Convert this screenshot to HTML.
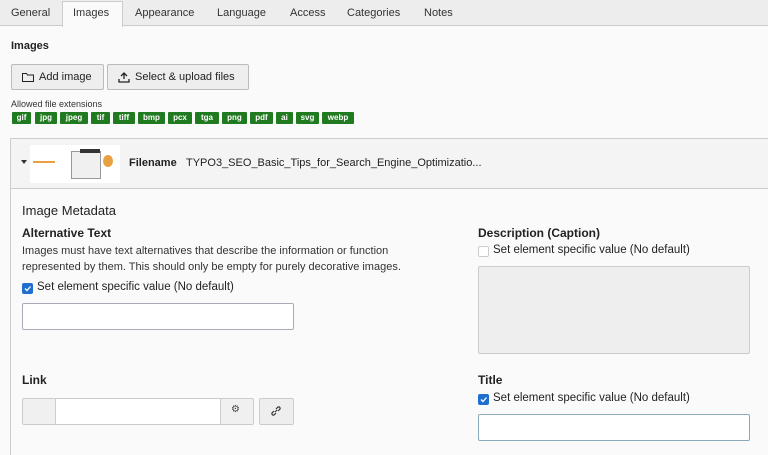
<!DOCTYPE html>
<html><head><style>
*{box-sizing:border-box;margin:0;padding:0}
body{width:768px;height:455px;overflow:hidden;background:#fafafa;font-family:"Liberation Sans","DejaVu Sans",sans-serif;font-size:11px;color:#222;position:relative}
.abs{position:absolute}
.tabs{left:0;top:0;width:768px;height:26px;background:#ededed;border-bottom:1px solid #ccc}
.tab{position:absolute;top:7px;font-size:11px;color:#333}
.act{left:62px;top:1px;width:61px;height:26px;background:#fafafa;border:1px solid #ccc;border-bottom:none;}
.btn{height:26px;background:#eee;border:1px solid #bbb;border-radius:2px;font-size:11px;color:#222;display:flex;align-items:center;padding-left:10px;gap:5px}
.ext{position:absolute;top:112px;height:12px;background:#207a1f;color:#fff;font-size:8px;font-weight:bold;line-height:12px;text-align:center;border-radius:1px}
.inp{background:#fff;border:1px solid #aab;border-radius:2px}
.cb{width:11px;height:11px;border-radius:2px}
.lbl{font-size:11.5px}
</style></head><body>
<div class="abs tabs"></div>
<div class="abs act"></div>
<div class="tab" style="left:11px">General</div>
<div class="tab" style="left:73px">Images</div>
<div class="tab" style="left:135px">Appearance</div>
<div class="tab" style="left:217px">Language</div>
<div class="tab" style="left:290px">Access</div>
<div class="tab" style="left:347px">Categories</div>
<div class="tab" style="left:424px">Notes</div>

<div class="abs" style="left:11px;top:40px;font-weight:bold">Images</div>
<div class="abs btn" style="left:11px;top:64px;width:93px"><svg width="12" height="10" viewBox="0 0 12 10"><path d="M0.5 1.5h4l1 1.5h6v6.5h-11z" fill="none" stroke="#222"/></svg>Add image</div>
<div class="abs btn" style="left:107px;top:64px;width:142px"><svg width="12" height="11" viewBox="0 0 12 11"><path d="M6 7V1M3 4l3-3 3 3M1 7v3h10V7" fill="none" stroke="#222" stroke-width="1.3"/></svg>Select &amp; upload files</div>
<div class="abs" style="left:11px;top:99px;font-size:9px;color:#333">Allowed file extensions</div>
<div class="ext" style="left:12px;width:19px">gif</div>
<div class="ext" style="left:35px;width:22px">jpg</div>
<div class="ext" style="left:60px;width:28px">jpeg</div>
<div class="ext" style="left:91px;width:19px">tif</div>
<div class="ext" style="left:113px;width:22px">tiff</div>
<div class="ext" style="left:138px;width:27px">bmp</div>
<div class="ext" style="left:168px;width:24px">pcx</div>
<div class="ext" style="left:195px;width:24px">tga</div>
<div class="ext" style="left:222px;width:25px">png</div>
<div class="ext" style="left:250px;width:23px">pdf</div>
<div class="ext" style="left:276px;width:17px">ai</div>
<div class="ext" style="left:296px;width:23px">svg</div>
<div class="ext" style="left:322px;width:32px">webp</div>

<div class="abs" style="left:10px;top:138px;width:758px;height:317px;border-left:1px solid #ccc;border-top:1px solid #ccc"></div>
<div class="abs" style="left:11px;top:139px;width:757px;height:50px;background:#f4f4f4;border-bottom:1px solid #ccc"></div>
<div class="abs" style="left:21px;top:160px;width:0;height:0;border-left:3px solid transparent;border-right:3px solid transparent;border-top:4px solid #333"></div>
<div class="abs" style="left:30px;top:145px;width:90px;height:38px;background:#fff"></div>
<div class="abs" style="left:33px;top:161px;width:22px;height:2px;background:#e8a040"></div>
<div class="abs" style="left:71px;top:151px;width:30px;height:28px;background:#f0f0f0;border:1px solid #999"></div>
<div class="abs" style="left:80px;top:149px;width:20px;height:4px;background:#333"></div>
<div class="abs" style="left:103px;top:155px;width:10px;height:12px;background:#e8a040;border-radius:50%"></div>
<div class="abs" style="left:129px;top:157px;font-weight:bold">Filename</div>
<div class="abs" style="left:186px;top:157px">TYPO3_SEO_Basic_Tips_for_Search_Engine_Optimizatio...</div>

<div class="abs" style="left:22px;top:203px;font-size:13px">Image Metadata</div>
<div class="abs" style="left:22px;top:226px;font-weight:bold;font-size:12px">Alternative Text</div>
<div class="abs" style="left:22px;top:243px;font-size:11px;line-height:16px;color:#333;width:440px">Images must have text alternatives that describe the information or function<br>represented by them. This should only be empty for purely decorative images.</div>
<div class="abs cb" style="left:22px;top:283px;background:#1f6fd0"></div>
<svg class="abs" style="left:22px;top:283px" width="11" height="11"><path d="M3 5.5l2 2 3.5-4" fill="none" stroke="#fff" stroke-width="1.3"/></svg>
<div class="abs lbl" style="left:37px;top:281px">Set element specific value (No default)</div>
<div class="abs inp" style="left:22px;top:303px;width:272px;height:27px"></div>

<div class="abs" style="left:478px;top:226px;font-weight:bold;font-size:12px">Description (Caption)</div>
<div class="abs cb" style="left:478px;top:246px;background:#fff;border:1px solid #ccc"></div>
<div class="abs lbl" style="left:493px;top:244px">Set element specific value (No default)</div>
<div class="abs" style="left:478px;top:266px;width:272px;height:88px;background:#eee;border:1px solid #ccc;border-radius:2px"></div>

<div class="abs" style="left:22px;top:373px;font-weight:bold;font-size:12px">Link</div>
<div class="abs" style="left:22px;top:398px;width:232px;height:27px;background:#f0f0f0;border:1px solid #ccc;border-radius:2px"></div>
<div class="abs" style="left:55px;top:399px;width:166px;height:25px;background:#fff;border-left:1px solid #ccc;border-right:1px solid #ccc"></div>
<div class="abs" style="left:231px;top:404px;font-size:10px;color:#444">⚙</div>
<div class="abs" style="left:259px;top:398px;width:35px;height:27px;background:#eee;border:1px solid #ccc;border-radius:2px"></div>
<svg class="abs" style="left:270px;top:405px" width="12" height="12" viewBox="0 0 12 12"><path d="M5 7l2-2M4 6l-2 2a1.5 1.5 0 0 0 2 2l2-2M8 6l2-2a1.5 1.5 0 0 0-2-2L6 4" fill="none" stroke="#333" stroke-width="1.2"/></svg>

<div class="abs" style="left:478px;top:373px;font-weight:bold;font-size:12px">Title</div>
<div class="abs cb" style="left:478px;top:394px;background:#1f6fd0"></div>
<svg class="abs" style="left:478px;top:394px" width="11" height="11"><path d="M3 5.5l2 2 3.5-4" fill="none" stroke="#fff" stroke-width="1.3"/></svg>
<div class="abs lbl" style="left:493px;top:392px">Set element specific value (No default)</div>
<div class="abs inp" style="left:478px;top:414px;width:272px;height:27px;border-color:#8ab"></div>
</body></html>
